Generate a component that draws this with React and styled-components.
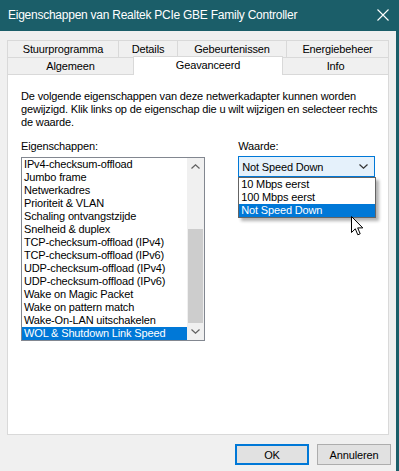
import React from 'react';
import styled, { createGlobalStyle } from 'styled-components';

const Global = createGlobalStyle`
  html, body { margin: 0; padding: 0; background: #f0f0f0; }
  body { font-family: "Liberation Sans", Arial, sans-serif; font-size: 11px; color: #000; letter-spacing: -0.15px; }
  * { box-sizing: border-box; }
`;

const Window = styled.div`
  width: 399px;
  height: 471px;
  background: #f0f0f0;
  border-right: 3px solid #1b5e69;
  display: flex;
  flex-direction: column;
  position: relative;
  overflow: hidden;
`;

const TitleBar = styled.div`
  height: 31px;
  flex: none;
  background: #1b5e69;
  color: #fff;
  display: flex;
  align-items: center;
  justify-content: space-between;
  padding: 0 7px 1px 8px;
  font-size: 12px;
  letter-spacing: -0.25px;
`;

const Body = styled.div`
  padding: 9px 7px 0 7px;
  display: flex;
  flex-direction: column;
`;

const TabRow = styled.div`
  display: flex;
  height: 17px;
  align-items: flex-end;
`;

const Tab = styled.div`
  flex: none;
  width: ${p => p.$w}px;
  height: ${p => (p.$active ? 19 : 17)}px;
  margin-left: ${p => (p.$first ? 0 : -1)}px;
  margin-bottom: ${p => (p.$active ? -1 : 0)}px;
  border: 1px solid #d9d9d9;
  border-bottom: none;
  background: ${p => (p.$active ? '#fff' : '#f0f0f0')};
  position: relative;
  z-index: ${p => (p.$active ? 2 : 1)};
  display: flex;
  align-items: center;
  justify-content: center;
  padding-bottom: ${p => (p.$active ? 2 : 0)}px;
  white-space: nowrap;
`;

const Panel = styled.div`
  height: 361px;
  background: #fff;
  border: 1px solid #d9d9d9;
  padding: 15px 13px 0 13px;
  display: flex;
  flex-direction: column;
`;

const Description = styled.p`
  margin: 0;
  line-height: 13px;
  white-space: nowrap;
`;

const Columns = styled.div`
  display: flex;
  gap: 33px;
  margin-top: 11px;
`;

const Column = styled.div`
  display: flex;
  flex-direction: column;
  width: ${p => p.$w}px;
`;

const Label = styled.div`
  line-height: 13px;
  margin-bottom: ${p => p.$gap}px;
`;

const ListBox = styled.div`
  height: 184px;
  border: 1px solid #828790;
  display: flex;
  background: #fff;
`;

const Items = styled.div`
  flex: 1;
  display: flex;
  flex-direction: column;
`;

const Item = styled.div`
  height: 13px;
  line-height: 13px;
  padding-left: 2px;
  white-space: nowrap;
  background: ${p => (p.$selected ? '#0078d7' : 'transparent')};
  color: ${p => (p.$selected ? '#fff' : '#000')};
`;

const ScrollBar = styled.div`
  width: 17px;
  flex: none;
  background: #f0f0f0;
  display: flex;
  flex-direction: column;
`;

const ScrollButton = styled.div`
  height: 17px;
  flex: none;
  display: flex;
  align-items: center;
  justify-content: center;
`;

const Track = styled.div`
  flex: 1;
  display: flex;
  flex-direction: column;
  padding: 0 1px;
`;

const Thumb = styled.div`
  background: #cdcdcd;
  margin-top: ${p => p.$offset}px;
  height: ${p => p.$size}px;
`;

const ComboWrap = styled.div`
  position: relative;
`;

const Combo = styled.div`
  height: 21px;
  border: 1px solid #0078d7;
  background: #e5f1fb;
  display: flex;
  align-items: center;
  justify-content: space-between;
  padding: 0 6px 0 3px;
`;

const DropList = styled.div`
  position: absolute;
  top: 21px;
  left: 0;
  width: 138px;
  border: 1px solid #646464;
  background: #fff;
  box-shadow: 3px 3px 3px rgba(0, 0, 0, 0.3);
  z-index: 5;
`;

const DropItem = styled.div`
  height: 13px;
  line-height: 13px;
  padding-left: 2px;
  white-space: nowrap;
  background: ${p => (p.$selected ? '#0078d7' : 'transparent')};
  color: ${p => (p.$selected ? '#fff' : '#000')};
`;

const ButtonRow = styled.div`
  display: flex;
  justify-content: flex-end;
  gap: 8px;
  margin-top: 9px;
  margin-right: -2px;
`;

const Button = styled.div`
  width: 74px;
  height: 21px;
  background: #e1e1e1;
  border: ${p => (p.$default ? '2px solid #0078d7' : '1px solid #adadad')};
  display: flex;
  align-items: center;
  justify-content: center;
`;

const Cursor = styled.svg`
  position: absolute;
  left: 351px;
  top: 216px;
  z-index: 10;
`;

const properties = [
  'IPv4-checksum-offload',
  'Jumbo frame',
  'Netwerkadres',
  'Prioriteit & VLAN',
  'Schaling ontvangstzijde',
  'Snelheid & duplex',
  'TCP-checksum-offload (IPv4)',
  'TCP-checksum-offload (IPv6)',
  'UDP-checksum-offload (IPv4)',
  'UDP-checksum-offload (IPv6)',
  'Wake on Magic Packet',
  'Wake on pattern match',
  'Wake-On-LAN uitschakelen',
  'WOL & Shutdown Link Speed',
];

const Chevron = ({ up, color = '#606060' }) => (
  <svg width="9" height="5" viewBox="0 0 9 5">
    <path
      d={up ? 'M0.5 4.5 L4.5 0.8 L8.5 4.5' : 'M0.5 0.5 L4.5 4.2 L8.5 0.5'}
      fill="none"
      stroke={color}
      strokeWidth="1.2"
    />
  </svg>
);

export default function App() {
  return (
    <>
      <Global />
      <Window>
        <TitleBar>
          <span>Eigenschappen van Realtek PCIe GBE Family Controller</span>
          <svg width="12" height="12" viewBox="0 0 12 12">
            <path d="M0.5 0.5 L11.5 11.5 M11.5 0.5 L0.5 11.5" stroke="#fff" strokeWidth="1.1" />
          </svg>
        </TitleBar>
        <Body>
          <TabRow>
            <Tab $first $w={112}>Stuurprogramma</Tab>
            <Tab $w={60}>Details</Tab>
            <Tab $w={110}>Gebeurtenissen</Tab>
            <Tab $w={103}>Energiebeheer</Tab>
          </TabRow>
          <TabRow>
            <Tab $first $w={127}>Algemeen</Tab>
            <Tab $active $w={150}>Geavanceerd</Tab>
            <Tab $w={107}>Info</Tab>
          </TabRow>
          <Panel>
            <Description>
              De volgende eigenschappen van deze netwerkadapter kunnen worden
              <br />
              gewijzigd. Klik links op de eigenschap die u wilt wijzigen en selecteer rechts
              <br />
              de waarde.
            </Description>
            <Columns>
              <Column $w={186}>
                <Label $gap={4}>Eigenschappen:</Label>
                <ListBox>
                  <Items>
                    {properties.map((p, i) => (
                      <Item key={p} $selected={i === properties.length - 1}>{p}</Item>
                    ))}
                  </Items>
                  <ScrollBar>
                    <ScrollButton><Chevron up /></ScrollButton>
                    <Track>
                      <Thumb $offset={54} $size={94} />
                    </Track>
                    <ScrollButton><Chevron /></ScrollButton>
                  </ScrollBar>
                </ListBox>
              </Column>
              <Column $w={138}>
                <Label $gap={3}>Waarde:</Label>
                <ComboWrap>
                  <Combo>
                    <span>Not Speed Down</span>
                    <Chevron color="#333" />
                  </Combo>
                  <DropList>
                    <DropItem>10 Mbps eerst</DropItem>
                    <DropItem>100 Mbps eerst</DropItem>
                    <DropItem $selected>Not Speed Down</DropItem>
                  </DropList>
                </ComboWrap>
              </Column>
            </Columns>
          </Panel>
          <ButtonRow>
            <Button $default>OK</Button>
            <Button>Annuleren</Button>
          </ButtonRow>
        </Body>
        <Cursor width="13" height="21" viewBox="0 0 13 21">
          <path
            d="M0.5 0.5 L0.5 16.5 L4.3 12.8 L6.8 18.8 L9.2 17.8 L6.7 11.9 L11.8 11.9 Z"
            fill="#fff"
            stroke="#000"
            strokeWidth="1"
            strokeLinejoin="miter"
          />
        </Cursor>
      </Window>
    </>
  );
}
